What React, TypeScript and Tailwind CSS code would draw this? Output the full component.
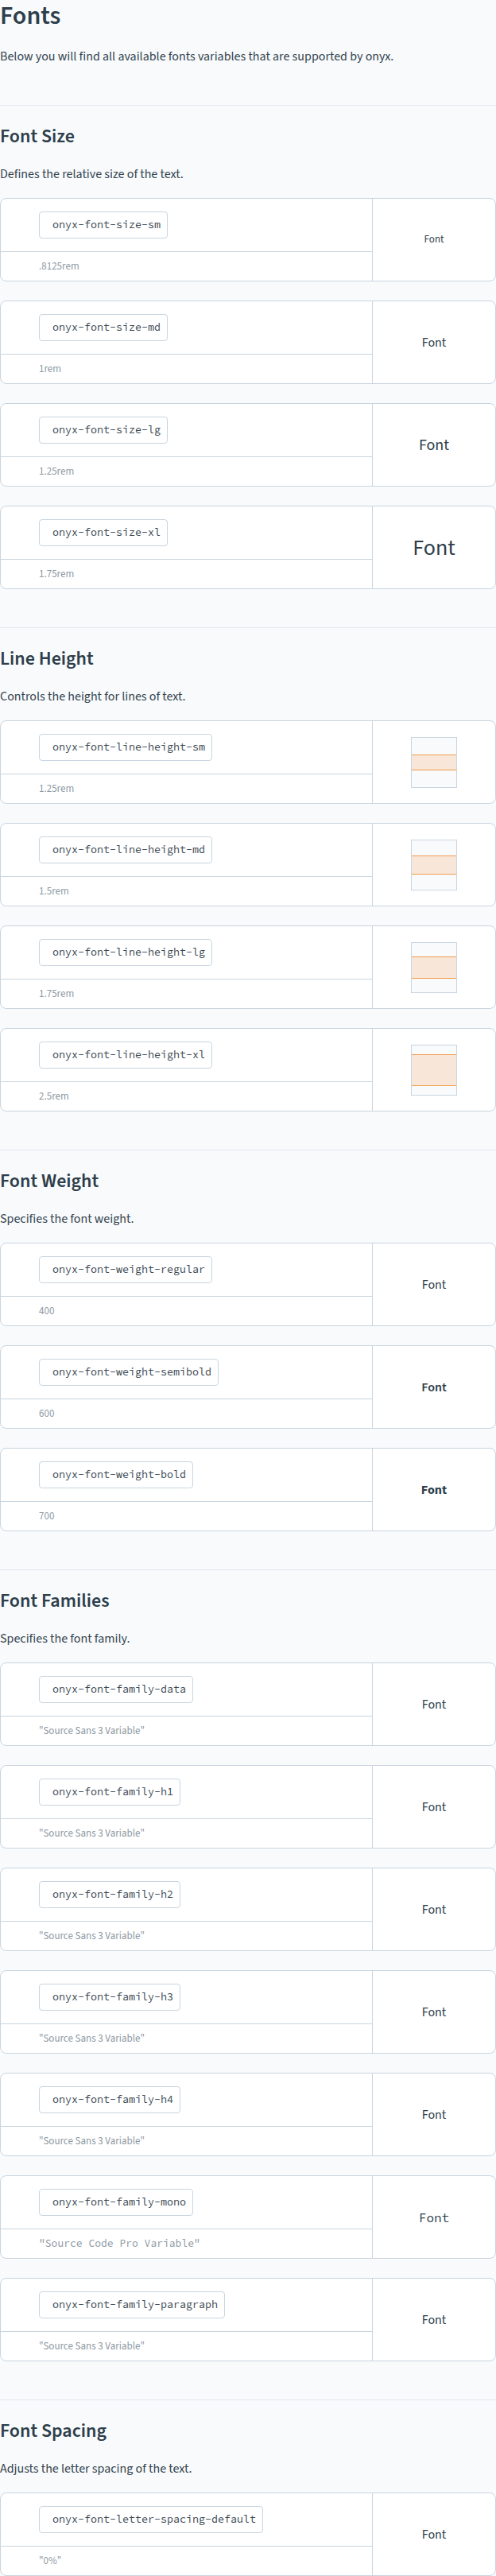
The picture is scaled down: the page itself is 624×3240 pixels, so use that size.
import React from "react";

type Row = {
  name: string;
  value: string;
  mono?: boolean;
  preview: React.ReactNode;
};

const sans = "font-['Source_Sans_3','Lato','Liberation_Sans',sans-serif]";
const mono = "font-['Source_Code_Pro','DejaVu_Sans_Mono','Liberation_Mono',monospace]";

const FontText = ({ className }: { className: string }) => (
  <span className={"text-[#2e3e4a] " + className}>Font</span>
);

const LineBox = ({ h }: { h: number }) => (
  <div className="w-[58px] h-[64px] border border-[#c8d5e0] bg-[#f8fafc] flex items-center">
    <div
      className="w-full border-y border-[#f29c4c] bg-[#f8e6d8]"
      style={{ height: h }}
    />
  </div>
);

const sections: { title: string; desc: string; rows: Row[] }[] = [
  {
    title: "Font Size",
    desc: "Defines the relative size of the text.",
    rows: [
      { name: "onyx-font-size-sm", value: ".8125rem", preview: <FontText className="text-[13px]" /> },
      { name: "onyx-font-size-md", value: "1rem", preview: <FontText className="text-[16px]" /> },
      { name: "onyx-font-size-lg", value: "1.25rem", preview: <FontText className="text-[20px]" /> },
      { name: "onyx-font-size-xl", value: "1.75rem", preview: <FontText className="text-[28px]" /> },
    ],
  },
  {
    title: "Line Height",
    desc: "Controls the height for lines of text.",
    rows: [
      { name: "onyx-font-line-height-sm", value: "1.25rem", preview: <LineBox h={20} /> },
      { name: "onyx-font-line-height-md", value: "1.5rem", preview: <LineBox h={24} /> },
      { name: "onyx-font-line-height-lg", value: "1.75rem", preview: <LineBox h={28} /> },
      { name: "onyx-font-line-height-xl", value: "2.5rem", preview: <LineBox h={40} /> },
    ],
  },
  {
    title: "Font Weight",
    desc: "Specifies the font weight.",
    rows: [
      { name: "onyx-font-weight-regular", value: "400", preview: <FontText className="text-base font-normal" /> },
      { name: "onyx-font-weight-semibold", value: "600", preview: <FontText className="text-base font-semibold" /> },
      { name: "onyx-font-weight-bold", value: "700", preview: <FontText className="text-base font-bold" /> },
    ],
  },
  {
    title: "Font Families",
    desc: "Specifies the font family.",
    rows: [
      { name: "onyx-font-family-data", value: '"Source Sans 3 Variable"', preview: <FontText className="text-base" /> },
      { name: "onyx-font-family-h1", value: '"Source Sans 3 Variable"', preview: <FontText className="text-base" /> },
      { name: "onyx-font-family-h2", value: '"Source Sans 3 Variable"', preview: <FontText className="text-base" /> },
      { name: "onyx-font-family-h3", value: '"Source Sans 3 Variable"', preview: <FontText className="text-base" /> },
      { name: "onyx-font-family-h4", value: '"Source Sans 3 Variable"', preview: <FontText className="text-base" /> },
      {
        name: "onyx-font-family-mono",
        value: '"Source Code Pro Variable"',
        mono: true,
        preview: <FontText className={"text-base " + mono} />,
      },
      { name: "onyx-font-family-paragraph", value: '"Source Sans 3 Variable"', preview: <FontText className="text-base" /> },
    ],
  },
  {
    title: "Font Spacing",
    desc: "Adjusts the letter spacing of the text.",
    rows: [
      { name: "onyx-font-letter-spacing-default", value: '"0%"', preview: <FontText className="text-base" /> },
    ],
  },
];

const Card = ({ row }: { row: Row }) => (
  <div className="grid grid-cols-[1fr_155px] border border-[#c8d5e0] rounded-lg bg-white overflow-hidden">
    <div className="flex flex-col">
      <div className="pl-12 py-4 border-b border-[#c8d5e0]">
        <div
          className={
            "inline-flex items-center h-[34px] pl-4 pr-2 border border-[#c8d5e0] rounded bg-white text-[13.33px] text-[#3a4853] " +
            mono
          }
        >
          {row.name}
        </div>
      </div>
      <div
        className={
          "pl-12 py-2 leading-5 text-[13px] text-[#8e99a3] " + (row.mono ? mono : "")
        }
      >
        {row.value}
      </div>
    </div>
    <div className="border-l border-[#c8d5e0] flex items-center justify-center">
      {row.preview}
    </div>
  </div>
);

const App = () => {
  return (
    <main className={"w-full min-h-screen bg-[#f8fafc] text-[#34444f] " + sans}>
      <header className="pb-[49px]">
        <h1 className="text-[32px] leading-[40px] font-semibold text-[#2e3e4a]">Fonts</h1>
        <p className="mt-[19px] text-base leading-6">
          Below you will find all available fonts variables that are supported by onyx.
        </p>
      </header>
      {sections.map((s) => (
        <section key={s.title} className="border-t border-[#e2e9ef] pt-[23px] pb-12">
          <h2 className="text-2xl leading-8 font-semibold text-[#2e3e4a]">{s.title}</h2>
          <p className="mt-[19px] text-base leading-6">{s.desc}</p>
          <div className="mt-[18px] flex flex-col gap-6">
            {s.rows.map((r) => (
              <Card key={r.name} row={r} />
            ))}
          </div>
        </section>
      ))}
    </main>
  );
};

export default App;
